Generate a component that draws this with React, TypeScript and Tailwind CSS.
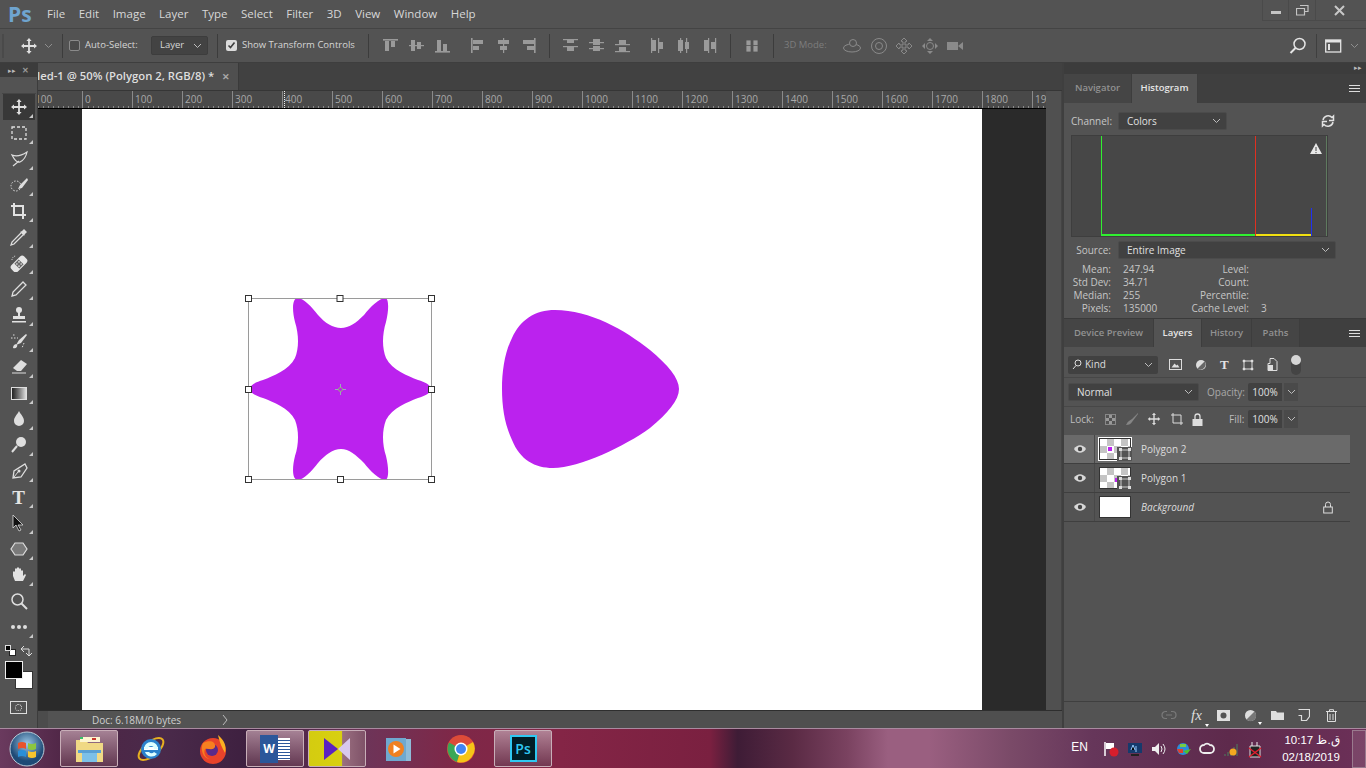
import React from "react";
const F = { fontFamily: '"Open Sans","Noto Sans","Liberation Sans",sans-serif' };

function Ic({ w = 20, h = 20, children, className = "", vb }: { w?: number; h?: number; children: React.ReactNode; className?: string; vb?: string }) {
  return <svg width={w} height={h} viewBox={vb ?? `0 0 ${w} ${h}`} className={"shrink-0 " + className}>{children}</svg>;
}
const Chev = ({ c = "#bdbdbd" }: { c?: string }) => <Ic w={9} h={6}><path d="M1 1l3.5 3.5L8 1" fill="none" stroke={c} strokeWidth="1" /></Ic>;

const MoveGlyph = ({ c = "#e0e0e0" }: { c?: string }) => (
  <Ic w={18} h={18} vb="0 0 18 18">
    <path d="M9 1l2.6 3H9.900v4.100H14V6.400l3 2.600-3 2.600V9.900H9.900V14h1.700L9 17l-2.600-3h1.700V9.900H4v1.700L1 9l3-2.600v1.700h4.100V4H6.400z" fill={c} />
  </Ic>
);

const menu = ["File", "Edit", "Image", "Layer", "Type", "Select", "Filter", "3D", "View", "Window", "Help"];

function Sep() { return <div className="w-px h-6 bg-[#3c3c3c] shrink-0" />; }

function Align({ v }: { v: number }) {
  const c = "#9a9a9a";
  const shapes: Record<number, React.ReactNode> = {
    0: <><rect x="1" y="2" width="15" height="1.600" fill={c} /><rect x="3" y="4" width="4" height="10" fill={c} /><rect x="9" y="4" width="4" height="6" fill={c} /></>,
    1: <><rect x="1" y="8" width="15" height="1.200" fill={c} /><rect x="3" y="3" width="4" height="11" fill={c} /><rect x="9" y="5" width="4" height="7" fill={c} /></>,
    2: <><rect x="1" y="14" width="15" height="1.600" fill={c} /><rect x="3" y="3" width="4" height="11" fill={c} /><rect x="9" y="7" width="4" height="7" fill={c} /></>,
    3: <><rect x="2" y="1" width="1.600" height="15" fill={c} /><rect x="4" y="3" width="10" height="4" fill={c} /><rect x="4" y="9" width="6" height="4" fill={c} /></>,
    4: <><rect x="8" y="1" width="1.200" height="15" fill={c} /><rect x="3" y="3" width="11" height="4" fill={c} /><rect x="5" y="9" width="7" height="4" fill={c} /></>,
    5: <><rect x="14" y="1" width="1.600" height="15" fill={c} /><rect x="3" y="3" width="11" height="4" fill={c} /><rect x="7" y="9" width="7" height="4" fill={c} /></>,
    6: <><rect x="1" y="2" width="15" height="1.200" fill={c} /><rect x="1" y="9" width="15" height="1.200" fill={c} /><rect x="5" y="3" width="7" height="3" fill={c} /><rect x="5" y="10" width="7" height="4" fill={c} /></>,
    7: <><rect x="1" y="5" width="15" height="1.200" fill={c} /><rect x="1" y="11" width="15" height="1.200" fill={c} /><rect x="5" y="2" width="7" height="6" fill={c} /><rect x="5" y="9" width="7" height="5" fill={c} /></>,
    8: <><rect x="1" y="7" width="15" height="1.200" fill={c} /><rect x="1" y="14" width="15" height="1.200" fill={c} /><rect x="5" y="3" width="7" height="4" fill={c} /><rect x="5" y="10" width="7" height="4" fill={c} /></>,
    9: <><rect x="2" y="1" width="1.200" height="15" fill={c} /><rect x="9" y="1" width="1.200" height="15" fill={c} /><rect x="3" y="3" width="4" height="11" fill={c} /><rect x="10" y="5" width="4" height="7" fill={c} /></>,
    10: <><rect x="5" y="1" width="1.200" height="15" fill={c} /><rect x="11" y="1" width="1.200" height="15" fill={c} /><rect x="3" y="3" width="5" height="11" fill={c} /><rect x="10" y="5" width="4" height="7" fill={c} /></>,
    11: <><rect x="7" y="1" width="1.200" height="15" fill={c} /><rect x="14" y="1" width="1.200" height="15" fill={c} /><rect x="3" y="3" width="4" height="11" fill={c} /><rect x="10" y="5" width="4" height="7" fill={c} /></>,
  };
  return <Ic w={17} h={17}>{shapes[v]}</Ic>;
}

function OptionsBar() {
  return (
    <div className="h-[34px] bg-[#535353] border-b border-[#3e3e3e] flex items-center text-[9.500px] text-[#d6d6d6] shrink-0 relative whitespace-nowrap">
      <div className="w-[2px] h-6 ml-[2px] bg-[#4a4a4a]" />
      <div className="ml-[16px] flex items-center gap-[6px] w-[42px]"><MoveGlyph /><Chev c="#8f8f8f" /></div>
      <Sep />
      <div className="ml-[6px] w-[11px] h-[11px] rounded-[2px] border border-[#8a8a8a] bg-[#4a4a4a]" />
      <span className="ml-[5px] w-[66px]">Auto-Select:</span>
      <div className="w-[57px] h-[19px] bg-[#434343] border border-[#3d3d3d] rounded-[2px] flex items-center justify-between pl-[8px] pr-[5px]"><span>Layer</span><Chev /></div>
      <div className="ml-[9px]"><Sep /></div>
      <div className="ml-[8px] w-[11px] h-[11px] rounded-[2px] bg-[#dcdcdc] flex items-center justify-center"><Ic w={9} h={9}><path d="M1.500 4.500l2 2 4-5" fill="none" stroke="#3f3f3f" strokeWidth="1.600" /></Ic></div>
      <span className="ml-[5px] w-[126px]">Show Transform Controls</span>
      <Sep />
      <div className="ml-[13px] flex items-center gap-[9px]"><Align v={0} /><Align v={1} /><Align v={2} /></div>
      <div className="ml-[18px] flex items-center gap-[8.500px]"><Align v={3} /><Align v={4} /><Align v={5} /></div>
      <div className="ml-[12px]"><Sep /></div>
      <div className="ml-[12px] flex items-center gap-[9px]"><Align v={6} /><Align v={7} /><Align v={8} /></div>
      <div className="ml-[18px] flex items-center gap-[9px]"><Align v={9} /><Align v={10} /><Align v={11} /></div>
      <div className="ml-[12px]"><Sep /></div>
      <div className="ml-[13px]"><Ic w={16} h={16}><path d="M2 2h5v12H2zM9 2h5v12H9zM2 7.500h12" fill="#9a9a9a" stroke="#535353" strokeWidth=".8" /></Ic></div>
      <div className="ml-[13px]"><Sep /></div>
      <span className="ml-[10px] text-[#7d7d7d] w-[49px]">3D Mode:</span>
      <div className="flex items-center gap-[7.500px] ml-[9px]">
        <Ic w={20} h={18}><g fill="none" stroke="#8a8a8a"><ellipse cx="10" cy="11" rx="8.500" ry="4" /><circle cx="11" cy="6" r="3.500" fill="#535353" /></g></Ic>
        <Ic w={18} h={18}><g fill="none" stroke="#8a8a8a"><circle cx="9" cy="9" r="7.500" /><circle cx="9" cy="9" r="3.500" /></g></Ic>
        <Ic w={18} h={18}><path d="M9 1l3 3-2 1v3h3l1-2 3 3-3 3-1-2h-3v3l2 1-3 3-3-3 2-1v-3H5l-1 2-3-3 3-3 1 2h3V5L6 4z" fill="none" stroke="#8a8a8a" /></Ic>
        <Ic w={18} h={18}><g fill="#8a8a8a"><path d="M9 1l3 3H6zM9 17l3-3H6zM1 9l3-3v6zM17 9l-3-3v6z" /></g><circle cx="9" cy="9" r="3.500" fill="none" stroke="#8a8a8a" /></Ic>
        <Ic w={18} h={14}><rect x="1" y="3" width="11" height="8" fill="#8a8a8a" /><path d="M12 7l5-4v8z" fill="#8a8a8a" /></Ic>
      </div>
      <div className="ml-auto flex items-center mr-[7px]">
        <Ic w={18} h={18}><circle cx="10.500" cy="7" r="5.500" fill="none" stroke="#e4e4e4" strokeWidth="1.500" /><path d="M6.500 11l-5 5" stroke="#e4e4e4" strokeWidth="2" /></Ic>
        <div className="w-px h-6 bg-[#3f3f3f] ml-[9px] mr-[8px]" />
        <Ic w={17} h={14}><rect x=".7" y="1" width="15" height="12" fill="none" stroke="#e4e4e4" strokeWidth="1.300" /><rect x="1" y="1" width="15" height="2.500" fill="#e4e4e4" /><rect x="3" y="5" width="2" height="6" fill="#e4e4e4" /></Ic>
        <div className="ml-[8px]"><Chev c="#8f8f8f" /></div>
      </div>
    </div>
  );
}

const Cor = () => <div className="absolute right-[2px] bottom-[2px] w-0 h-0 border-l-[4px] border-l-transparent border-b-[4px] border-b-[#c9c9c9]" />;

const tools: React.ReactNode[] = [
  <MoveGlyph key="m" />,
  <Ic key="a" w={18} h={18}><rect x="2" y="3" width="14" height="12" fill="none" stroke="#dedede" strokeWidth="1.300" strokeDasharray="3 2" /></Ic>,
  <Ic key="b" w={18} h={18}><path d="M2 5c5 2 9 1 15-3-1 5-3 8-7 10-3 1-6-3-8-7zM9 11l-6 5" fill="none" stroke="#dedede" strokeWidth="1.200" /></Ic>,
  <Ic key="c" w={18} h={18}><circle cx="6" cy="10" r="5" fill="none" stroke="#dedede" strokeDasharray="1.500 1.500" /><path d="M17 2l-7 7-2 4 4-1 6-8z" fill="#dedede" /></Ic>,
  <Ic key="d" w={18} h={18}><path d="M4 1v12h12M1 4h12v13" fill="none" stroke="#e2e2e2" strokeWidth="2" /></Ic>,
  <Ic key="e" w={18} h={18}><path d="M11 5l-9 9-1 3 3-1 9-9" fill="none" stroke="#dedede" strokeWidth="1.300" /><path d="M10 4l4 4 1-2 2-2-3-3-2 2z" fill="#dedede" /></Ic>,
  <Ic key="f" w={18} h={18}><g transform="rotate(-45 9 10)"><rect x="0" y="5.500" width="18" height="9" rx="3" fill="#e6e6e6" /><rect x="6" y="6.500" width="6" height="7" fill="#6a6a6a" /><circle cx="7.500" cy="8.500" r=".8" fill="#eee" /><circle cx="10.500" cy="8.500" r=".8" fill="#eee" /><circle cx="7.500" cy="11.500" r=".8" fill="#eee" /><circle cx="10.500" cy="11.500" r=".8" fill="#eee" /></g><path d="M2 6a4 4 0 014-4" fill="none" stroke="#e2e2e2" strokeDasharray="1 1" /></Ic>,
  <Ic key="g" w={18} h={18}><path d="M13 2l3 3L6 15l-4 1 1-4z" fill="none" stroke="#dedede" strokeWidth="1.300" /></Ic>,
  <Ic key="h" w={18} h={18}><circle cx="9" cy="4" r="3" fill="#e2e2e2" /><rect x="8" y="6" width="2" height="4" fill="#e2e2e2" /><path d="M3 10h12v3H3zM2 15h14v1.500H2z" fill="#e2e2e2" /></Ic>,
  <Ic key="i" w={18} h={18}><path d="M16 2l-7 6-3 5 5-2 6-8zM7 12c-3 0-4 2-4 4 3 1 5-1 4-4z" fill="#dedede" /><path d="M1 6h7M3 3h3M14 11l-2 5" stroke="#dedede" strokeDasharray="1.500 1.500" /></Ic>,
  <Ic key="j" w={18} h={18}><path d="M11 2l6 4-6 7H7L3 10z" fill="#dedede" /><path d="M2 15h14" stroke="#dedede" /></Ic>,
  <div key="k" className="w-[16px] h-[13px] border border-[#dedede] bg-gradient-to-r from-[#222] to-[#ddd]" />,
  <Ic key="l" w={18} h={18}><path d="M9 1c2 4 5 6 5 10a5 5 0 01-10 0c0-4 3-6 5-10z" fill="#dedede" /></Ic>,
  <Ic key="m2" w={18} h={18}><circle cx="11" cy="6" r="5" fill="#dedede" /><path d="M7 10l-5 6" stroke="#dedede" strokeWidth="2" /></Ic>,
  <Ic key="n" w={18} h={18}><path d="M15 2l2 4-6 9-8 1 1-7z" fill="none" stroke="#dedede" strokeWidth="1.300" /><circle cx="9" cy="9" r="1.500" fill="#dedede" /><path d="M4 15l4-5" stroke="#dedede" /></Ic>,
  <span key="o" className="text-[#e4e4e4] text-[19px] leading-none font-bold" style={{ fontFamily: '"Liberation Serif",serif' }}>T</span>,
  <Ic key="p" w={18} h={18}><path d="M3 1v13l3-3 3 6 2-1-3-5h5z" fill="#111" stroke="#ddd" strokeWidth=".8" /></Ic>,
  <Ic key="q" w={18} h={18}><path d="M5 3h8l4 6-4 6H5L1 9z" fill="#7a7a7a" stroke="#dedede" strokeWidth="1.200" /></Ic>,
  <Ic key="r" w={18} h={18}><path d="M3 10V6l1-1 1 1V3l1-1 1 1v-1l1-1 1 1v1l1-1 1 1v2l1-1 1 1v5l2-2 1 1-3 6H5z" fill="#e2e2e2" /></Ic>,
  <Ic key="s" w={18} h={18}><circle cx="7.500" cy="7.500" r="5.500" fill="none" stroke="#dedede" strokeWidth="1.500" /><path d="M11.500 11.500L17 17" stroke="#dedede" strokeWidth="2" /></Ic>,
  <Ic key="t" w={18} h={18}><circle cx="3" cy="9" r="2" fill="#dedede" /><circle cx="9" cy="9" r="2" fill="#dedede" /><circle cx="15" cy="9" r="2" fill="#dedede" /></Ic>,
];

function Toolbar() {
  return (
    <div className="w-[38px] shrink-0 bg-[#535353] border-r border-[#3c3c3c] flex flex-col items-center relative z-10">
      <div className="w-full h-[14px] bg-[#3c3c3c] flex items-center justify-between px-[8px]">
        <span className="text-[7px] text-[#bbb] leading-none">▸▸</span>
        <span className="text-[8px] text-[#999] leading-none font-bold">✕</span>
      </div>
      <div className="w-[34px] h-[17px] border-b border-[#454545]" />
      <div className="flex flex-col">
        {tools.map((t, i) => (
          <div key={i} className={"relative w-[32px] h-[26px] flex items-center justify-center " + (i === 0 ? "bg-[#383838]" : "")}>
            {t}{i !== 19 && <Cor />}
          </div>
        ))}
      </div>
      <div className="w-[32px] h-[15px] flex items-center justify-between px-[2px] mt-[3px]">
        <div className="relative w-[11px] h-[11px]"><div className="absolute right-0 bottom-0 w-[7px] h-[7px] bg-white border border-[#222]" /><div className="absolute left-0 top-0 w-[6px] h-[6px] bg-black border border-[#ddd]" /></div>
        <Ic w={13} h={12}><path d="M1 4h8v7M1 4l3-3M1 4l3 3M9 11l3-3M9 11L6 8" fill="none" stroke="#ddd" /></Ic>
      </div>
      <div className="relative w-[28px] h-[28px] mt-[3px]">
        <div className="absolute left-[10px] top-[10px] w-[18px] h-[18px] bg-white border border-[#333]" />
        <div className="absolute left-0 top-0 w-[18px] h-[18px] bg-black border border-[#eee]" />
      </div>
      <div className="mt-[12px] w-[17px] h-[13px] border border-[#ddd] flex items-center justify-center"><div className="w-[7px] h-[7px] rounded-full border border-dotted border-[#ddd]" /></div>
    </div>
  );
}

const rulerLabels = ["100", "0", "100", "200", "300", "400", "500", "600", "700", "800", "900", "1000", "1100", "1200", "1300", "1400", "1500", "1600", "1700", "1800", "19"];

function Ruler() {
  return (
    <div className="h-[18px] shrink-0 bg-[#494949] flex overflow-hidden border-b border-black relative">
      {rulerLabels.map((l, i) => (
        <div key={i} className="w-[50px] shrink-0 border-l border-[#8a8a8a] text-[10px] leading-none text-[#a8a8a8] pl-[2px] pt-[3px] h-[17px] relative" style={i === 0 ? { marginLeft: -6 } : undefined}>
          {l}
          <div className="absolute bottom-0 left-[5px] right-0 h-[2px] bg-[repeating-linear-gradient(90deg,#8a8a8a_0,#8a8a8a_1px,transparent_1px,transparent_5px)]" />
        </div>
      ))}
      <div className="absolute left-[246px] top-0 bottom-0 border-l border-dotted border-[#eee]" />
    </div>
  );
}

function Artboard() {
  return (
    <div className="w-[900px] h-full bg-white relative">
      <svg width="900" height="601" className="absolute left-0 top-0">
        <g transform="translate(-82,-109)">
          <path d="M298 298C303 298 312 307 318 315C325 323 333 328 341 328C349 328 356 323 364 315C370 307 380 298 385 298C389 298 389 310 386 322C382 335 382 348 386 358C392 370 408 376 418 380C425 382 431 385 431 389C431 393 425 396 418 398C408 402 392 408 386 420C382 430 382 444 386 456C389 468 389 480 385 480C380 480 370 471 364 463C356 455 349 449 341 449C333 449 325 455 318 463C312 471 303 480 298 480C292 480 292 468 295 456C299 444 299 430 295 420C289 408 273 402 263 398C256 396 250 393 250 389C250 385 256 382 263 380C273 376 289 370 295 358C299 348 299 335 295 322C292 310 292 298 298 298Z" fill="#bb22ee" />
          <path d="M555 310C590 310 625 330 650 350C668 365 679 378 679 389C679 400 668 413 650 428C625 446 580 468 553 468C535 468 520 460 512 440C505 425 502 408 502 389C502 370 505 352 512 338C520 320 535 310 555 310Z" fill="#bb22ee" />
          <rect x="248.500" y="298.500" width="183" height="181" fill="none" stroke="#9a9a9a" />
          {[[248, 298], [339.500, 298], [431, 298], [248, 389], [431, 389], [248, 479], [340, 479], [431, 479]].map(([x, y], i) => (
            <rect key={i} x={x - 2.500} y={y - 2.500} width="6" height="6" fill="#fff" stroke="#333" strokeWidth="1" />
          ))}
          <path d="M335 389.500h4M342 389.500h4M340.500 384v4M340.500 391v4" stroke="#9ab" strokeWidth="1" />
          <circle cx="340.500" cy="389.500" r="2" fill="none" stroke="#9a7" />
        </g>
      </svg>
    </div>
  );
}

function Center() {
  return (
    <div className="flex-1 min-w-0 flex flex-col bg-[#3f3f3f]">
      <div className="h-[28px] bg-[#414141] flex shrink-0 border-b border-[#363636]">
        <div className="w-[201px] bg-[#4f4f4f] border-r border-[#3a3a3a] flex items-center justify-between pr-[8px] overflow-hidden">
          <span className="text-[11.300px] font-semibold text-[#dedede] whitespace-nowrap ml-[-1px]">led-1 @ 50% (Polygon 2, RGB/8) *</span>
          <span className="text-[9px] text-[#a8a8a8] font-bold">✕</span>
        </div>
      </div>
      <div className="flex-1 min-h-0 flex">
        <div className="w-[1008px] shrink-0 flex flex-col">
          <Ruler />
          <div className="flex-1 min-h-0 bg-[#2a2a2a] flex pl-[44px]">
            <Artboard />
          </div>
        </div>
        <div className="flex-1 bg-[#505050] border-r border-[#444]" />
      </div>
      <div className="h-[18px] bg-[#4c4c4c] border-t border-[#2e2e2e] flex items-center shrink-0">
        <div className="w-[10px]" />
        <div className="w-[182px] h-full bg-[#535353] flex items-center text-[10px] text-[#cfcfcf]">
          <span className="ml-[44px] leading-none">Doc: 6.18M/0 bytes</span>
          <svg width="6" height="10" className="ml-auto mr-[2px]"><path d="M1 0l4 5-4 5" fill="none" stroke="#bbb" /></svg>
        </div>
        <div className="flex-1 h-full bg-[#4f4f4f]" />
      </div>
    </div>
  );
}

function Tab({ t, on, w }: { t: string; on?: boolean; w: number }) {
  return <div style={{ width: w }} className={"h-full flex items-center justify-center text-[9.500px] font-semibold border-r border-[#3d3d3d] " + (on ? "bg-[#535353] text-[#e6e6e6]" : "bg-[#454545] text-[#929292]")}>{t}</div>;
}
const Hamb = () => <div className="ml-auto mr-[6px] w-[11px] h-[7px] border-y border-[#ddd] relative"><div className="absolute left-0 right-0 top-[2px] h-px bg-[#ddd]" /></div>;

function Sel({ w, t, className = "" }: { w: number; t: string; className?: string }) {
  return <div style={{ width: w }} className={"h-[18px] bg-[#414141] border border-[#4b4b4b] rounded-[2px] flex items-center justify-between pl-[8px] pr-[5px] text-[10px] text-[#e0e0e0] shrink-0 " + className}><span>{t}</span><Chev /></div>;
}

const Eye = () => <Ic w={14} h={10}><path d="M1 5c3-5 9-5 12 0-3 5-9 5-12 0z" fill="#d8d8d8" /><circle cx="7" cy="5" r="2.200" fill="#444" /></Ic>;
const Checker = "bg-[repeating-conic-gradient(#c4c4c4_0_25%,#ffffff_0_50%)] bg-[length:14px_14px]";

function LayerRow({ name, sel, bg, italic, dot }: { name: string; sel?: boolean; bg?: boolean; italic?: boolean; dot?: string }) {
  return (
    <div className={"h-[29px] flex items-center border-b border-[#3f3f3f] w-[286px] " + (sel ? "bg-[#6a6a6a]" : "bg-[#535353]")}>
      <div className="w-[31px] h-full flex items-center justify-center border-r border-[#484848] pl-[2px]"><Eye /></div>
      <div className={"relative ml-[4px] w-[32px] h-[22px] border border-[#333] " + (bg ? "bg-white" : Checker) + (sel ? " outline outline-1 outline-white" : "")}>
        {dot && <div className={"absolute w-[4px] h-[4px] bg-[#bb22ee] " + dot} />}
        {!bg && <div className="absolute right-[-2px] bottom-[-2px] w-[15px] h-[14px] bg-[#535353] flex items-center justify-center">
          <Ic w={12} h={12}><rect x="2" y="2" width="8" height="8" fill="none" stroke="#ccc" /><path d="M0 0h3v3H0zM9 0h3v3H9zM0 9h3v3H0zM9 9h3v3H9z" fill="#ddd" /></Ic>
        </div>}
      </div>
      <span className={"ml-[10px] text-[10px] text-[#dcdcdc] " + (italic ? "italic" : "")}>{name}</span>
      {bg && <div className="ml-auto mr-[17px]"><Ic w={10} h={13}><path d="M2.500 6V3.500a2.500 2.500 0 015 0V6" fill="none" stroke="#ddd" /><rect x=".7" y="6" width="8.600" height="6" fill="none" stroke="#ddd" /></Ic></div>}
    </div>
  );
}

function RightPanels() {
  return (
    <div className="w-[304px] shrink-0 flex bg-[#3f3f3f] text-[10px]">
      <div className="w-[2px] bg-[#3f3f3f]" />
      <div className="flex-1 flex flex-col bg-[#535353] relative">
        <div className="h-[11px] bg-[#3c3c3c] flex justify-end items-center pr-[4px] text-[7px] text-[#bbb]">▸▸</div>
        <div className="h-[29px] flex bg-[#3f3f3f] items-center">
          <Tab t="Navigator" w={68} /><Tab t="Histogram" on w={66} /><Hamb />
        </div>
        <div className="h-[215px] px-[7px] relative text-[#c6c6c6]">
          <div className="h-[32px] pt-[4px] flex items-center">
            <span className="w-[47px]">Channel:</span>
            <Sel w={109} t="Colors" />
            <div className="ml-[94px]"><Ic w={14} h={14}><path d="M2 6a5.200 5.200 0 019-2.500l1.500-1.500v4.500H8M12 8a5.200 5.200 0 01-9 2.500L1.500 12V7.500H6" fill="none" stroke="#e2e2e2" strokeWidth="1.500" /></Ic></div>
          </div>
          <div className="w-[257px] h-[102px] bg-[#474747] border border-[#3e3e3e] relative overflow-hidden">
            <div className="absolute left-[29px] top-0 w-px h-[100px] bg-[#30f030]" />
            <div className="absolute left-[183px] top-0 w-px h-[100px] bg-[#e03020]" />
            <div className="absolute left-[254px] top-0 w-px h-[100px] bg-[#5f7a5f]" />
            <div className="absolute left-[29px] top-[98px] w-[154px] h-[2px] bg-[#30f030]" />
            <div className="absolute left-[184px] top-[98px] w-[55px] h-[2px] bg-[#f0e010]" />
            <div className="absolute left-[239px] top-[72px] w-px h-[28px] bg-[#2030f0]" />
            <div className="absolute left-[237px] top-[6px]"><Ic w={14} h={13}><path d="M7 1l6 11H1z" fill="#e8e8e8" /><path d="M7 5v4M7 10v1.200" stroke="#444" /></Ic></div>
          </div>
          <div className="flex items-center h-[26px]">
            <span className="w-[40px] text-right mr-[7px]">Source:</span>
            <Sel w={218} t="Entire Image" />
          </div>
          <div className="grid gap-x-[12px] leading-[13px] whitespace-nowrap -ml-[5px]" style={{ gridTemplateColumns: "45px 50px 64px 30px" }}>
            {[["Mean:", "247.94", "Level:", ""], ["Std Dev:", "34.71", "Count:", ""], ["Median:", "255", "Percentile:", ""], ["Pixels:", "135000", "Cache Level:", "3"]].flatMap((r) => [
              <span key={r[0]} className="text-right">{r[0]}</span>,
              <span key={r[1]}>{r[1]}</span>,
              <span key={r[2]} className="text-right justify-self-end">{r[2]}</span>,
              <span key={r[2] + "v"}>{r[3]}</span>,
            ])}
          </div>
        </div>
        <div className="h-[29px] flex bg-[#3f3f3f] items-center border-t border-[#3a3a3a]">
          <Tab t="Device Preview" w={90} /><Tab t="Layers" on w={48} /><Tab t="History" w={50} /><Tab t="Paths" w={48} /><Hamb />
        </div>
        <div className="h-[31px] flex items-center pl-[4px] pt-[5px] border-b border-[#474747] text-[#ddd]">
          <div className="w-[90px] h-[18px] bg-[#414141] rounded-[2px] flex items-center pl-[4px] pr-[5px] gap-[3px]">
            <Ic w={10} h={11}><circle cx="6" cy="4" r="3" fill="none" stroke="#ddd" /><path d="M4 6.500L1 10" stroke="#ddd" /></Ic>
            <span>Kind</span><span className="ml-auto"><Chev /></span>
          </div>
          <div className="ml-[11px] flex items-center gap-[13px]">
            <Ic w={13} h={11}><rect x=".5" y=".5" width="12" height="10" fill="none" stroke="#ddd" /><path d="M2.500 8.500l3-4 2 2 1-1 2 3z" fill="#ddd" /></Ic>
            <Ic w={12} h={12}><circle cx="6" cy="6" r="5" fill="#ddd" /><path d="M9.500 2.500L2.500 9.500A5 5 0 009.500 2.500z" fill="#666" /></Ic>
            <span className="text-[#e4e4e4] text-[13px] leading-none font-bold" style={{ fontFamily: '"Liberation Serif",serif' }}>T</span>
            <Ic w={12} h={12}><rect x="2" y="2" width="8" height="8" fill="none" stroke="#ddd" /><path d="M1 1h2v2H1zM9 1h2v2H9zM1 9h2v2H1zM9 9h2v2H9z" fill="#ddd" stroke="#ddd" strokeWidth=".5" /></Ic>
            <Ic w={11} h={13}><path d="M3 .5h4l3 3v9H1v-7h2z" fill="none" stroke="#ddd" /><rect x="1" y="7" width="5" height="6" fill="#ddd" /></Ic>
          </div>
          <div className="ml-[13px] w-[10px] h-[20px] rounded-full bg-[#444] relative"><div className="absolute top-0 left-0 w-[10px] h-[10px] rounded-full bg-[#d6d6d6]" /></div>
        </div>
        <div className="h-[29px] flex items-center pl-[4px] border-b border-[#474747]">
          <Sel w={131} t="Normal" />
          <span className="ml-[8px] text-[#a9a9a9] w-[36px]">Opacity:</span>
          <div className="ml-[5px] h-[18px] w-[34px] bg-[#414141] flex items-center justify-center text-[#e0e0e0] rounded-l-[2px]">100%</div>
          <div className="ml-[2px] h-[18px] w-[14px] bg-[#4a4a4a] flex items-center justify-center"><Chev /></div>
        </div>
        <div className="h-[28px] flex items-center pl-[6px] pb-[4px] text-[#bdbdbd]">
          <span className="w-[25px]">Lock:</span>
          <div className="flex items-center gap-[8.500px] ml-[10px]">
            <div className={"w-[11px] h-[11px] border border-[#888] bg-[repeating-conic-gradient(#999_0_25%,#535353_0_50%)] bg-[length:6px_6px]"} />
            <Ic w={14} h={14}><path d="M13 1L7 7 4 9c-2 1-2 3-3 4 3 0 5-1 6-3l6-8z" fill="#858585" /></Ic>
            <Ic w={14} h={14} vb="0 0 18 18"><path d="M9 1l2.600 3H9.900v4.100H14V6.400l3 2.600-3 2.600V9.900H9.900V14h1.700L9 17l-2.600-3h1.700V9.900H4v1.700L1 9l3-2.600v1.700h4.100V4H6.400z" fill="#ddd" /></Ic>
            <Ic w={14} h={14}><path d="M3 1v10h10M1 3h10v10" fill="none" stroke="#ddd" /></Ic>
            <Ic w={11} h={13}><path d="M3 6V3.500a2.500 2.500 0 015 0V6" fill="none" stroke="#ddd" strokeWidth="1.300" /><rect x=".5" y="6" width="10" height="7" fill="#ddd" /></Ic>
          </div>
          <span className="ml-[26px] w-[14px]">Fill:</span>
          <div className="ml-[5px] h-[18px] w-[34px] bg-[#414141] flex items-center justify-center text-[#e0e0e0] rounded-l-[2px]">100%</div>
          <div className="ml-[2px] h-[18px] w-[14px] bg-[#4a4a4a] flex items-center justify-center"><Chev /></div>
        </div>
        <div className="flex flex-col">
          <LayerRow name="Polygon 2" sel dot="left-[8px] top-[8px]" />
          <LayerRow name="Polygon 1" dot="left-[15px] top-[10px]" />
          <LayerRow name="Background" bg italic />
        </div>
        <div className="flex-1" />
        <div className="h-[27px] border-t border-[#3f3f3f] flex items-center justify-end pr-[29px] gap-[14px] bg-[#535353]">
          <Ic w={16} h={10}><path d="M6 1.500H4.500a3.500 3.500 0 000 7H6M10 1.500h1.500a3.500 3.500 0 010 7H10M5 5h6" fill="none" stroke="#7a7a7a" strokeWidth="1.200" /></Ic>
          <span className="relative text-[15px] w-[12px] text-[#dedede] italic leading-none" style={{ fontFamily: '"Liberation Serif",serif' }}>fx
            <div className="absolute -right-[6px] -bottom-[4px] w-0 h-0 border-x-[2.500px] border-x-transparent border-t-[3px] border-t-white" />
          </span>
          <Ic w={13} h={11}><rect width="13" height="11" fill="#e0e0e0" /><circle cx="6.500" cy="5.500" r="3" fill="#555" /></Ic>
          <div className="relative">
            <Ic w={13} h={13}><circle cx="6.500" cy="6.500" r="5.500" fill="#ddd" /><path d="M10.500 2.500l-8 8a5.500 5.500 0 008-8z" fill="#777" /></Ic>
            <div className="absolute -right-[5px] -bottom-[3px] w-0 h-0 border-x-[2.500px] border-x-transparent border-t-[3px] border-t-white" />
          </div>
          <Ic w={13} h={10}><path d="M0 1h5l1 1.500h7V10H0z" fill="#ddd" /></Ic>
          <Ic w={12} h={12}><path d="M.5.500h11v7l-3 4h-5v-5h-3" fill="none" stroke="#ddd" strokeWidth="1.200" /></Ic>
          <Ic w={11} h={13} className="ml-[2px]"><path d="M0 2.500h11M3.500 2.500V.7h4v1.800M1.500 3v9.500h8V3M4 5v6M7 5v6" fill="none" stroke="#ddd" /></Ic>
        </div>
      </div>
    </div>
  );
}

function TaskBtn({ active, children, className = "" }: { active?: boolean; children: React.ReactNode; className?: string }) {
  return (
    <div className="w-[62px] h-full flex items-center justify-center shrink-0">
      <div className={"w-[58px] h-[37px] flex items-center justify-center rounded-[2px] " + (active ? "border border-[#c8aeb8] bg-gradient-to-b from-[#bb98a8]/80 to-[#6c4056]/70 " : "") + className}>{children}</div>
    </div>
  );
}

function Tray({ children }: { children: React.ReactNode }) {
  return <div className="w-[24px] flex items-center justify-center shrink-0">{children}</div>;
}

function Taskbar() {
  return (
    <div className="h-[40px] shrink-0 flex items-center bg-[linear-gradient(90deg,#6a3a5e_0%,#4e2545_5%,#4a2a4a_12%,#3e2040_18%,#6e3458_27%,#7e2848_33%,#842546_41%,#7a2040_52%,#3e1c36_54%,#5a2a44_58%,#7a4260_62%,#9a5f80_65%,#9a5f80_68%,#7a4a68_74%,#66365a_80%,#5e2a4c_90%,#6c3058_100%)] border-t border-[#a98aa0] relative text-white">
      <div className="w-[58px] shrink-0 flex justify-center pr-[4px]">
        <svg width="36" height="36"><defs><radialGradient id="orb" cx=".5" cy=".35"><stop offset="0" stopColor="#9cc8e8" /><stop offset="1" stopColor="#1e4a76" /></radialGradient></defs><circle cx="18" cy="18" r="17" fill="url(#orb)" stroke="#b8cbd8" />
          <path d="M9 12q4-2 8 0v6q-4-2-8 0z" fill="#e8532b" /><path d="M19 12q4 2 8 0v6q-4 2-8 0z" fill="#8cc63f" /><path d="M9 20q4-2 8 0v6q-4-2-8 0z" fill="#2a8fd8" /><path d="M19 20q4 2 8 0v6q-4 2-8 0z" fill="#f7c52d" /></svg>
      </div>
      <TaskBtn active>
        <svg width="31" height="30"><path d="M2 6h10l2 3h15v19H2z" fill="#f0d985" /><rect x="6" y="3" width="20" height="5" fill="#fdf5d0" /><rect x="6" y="3" width="3" height="2" fill="#39c06a" /><rect x="18" y="4" width="4" height="2" fill="#c8382e" /><path d="M8 18h15v10H8z" fill="#7cc0e8" /><path d="M4 16h23v3H4z" fill="#59a0d4" /></svg>
      </TaskBtn>
      <TaskBtn>
        <svg width="30" height="32"><ellipse cx="15" cy="16" rx="15" ry="7" transform="rotate(-40 15 16)" fill="none" stroke="#e8b020" strokeWidth="2" /><circle cx="15" cy="16" r="10" fill="#2a82cc" /><rect x="8" y="14" width="14" height="3" fill="#fff" /><path d="M8 16a7 7 0 0114 0h-4a3 3 0 00-6 0z" fill="#dff" /><path d="M9 19a7 7 0 0012 2l-3-2a3 3 0 01-5 0z" fill="#dff" /></svg>
      </TaskBtn>
      <TaskBtn>
        <svg width="30" height="32"><circle cx="15" cy="18" r="13" fill="#e8432a" /><path d="M20 2c6 5 9 11 7 18-3-6-5-9-7-18z" fill="#fcb022" /><circle cx="14" cy="17" r="6" fill="#5a2a8a" /><path d="M5 10c6-3 13-2 12 4-2 4-7 1-10 2-2 5 1 9 5 10-7 0-10-10-7-16z" fill="#f78020" /></svg>
      </TaskBtn>
      <TaskBtn active>
        <div className="relative w-[30px] h-[28px]"><div className="absolute right-0 top-[3px] w-[20px] h-[22px] bg-white bg-[repeating-linear-gradient(180deg,#fff_0,#fff_2px,#2b579a_2px,#2b579a_3px)]" /><div className="absolute left-0 top-0 w-[18px] h-[28px] bg-[#2b579a] flex items-center justify-center text-[12px] font-bold text-white">W</div></div>
      </TaskBtn>
      <TaskBtn className="border border-[#c8aeb8] bg-[linear-gradient(90deg,#d4cc10_0%,#d8d010_58%,#9a6f80_60%,#7f5268_100%)]">
        <svg width="30" height="26"><path d="M2 2l14 11L2 24z" fill="#5b22c0" /><path d="M28 2L16 13l12 11z" fill="#d8c8ec" /></svg>
      </TaskBtn>
      <TaskBtn>
        <svg width="28" height="28"><rect x="4" y="4" width="22" height="22" fill="#8fbcd8" /><rect x="1" y="3" width="20" height="23" fill="#6fa9cf" /><circle cx="11" cy="14" r="8" fill="#f08020" /><path d="M8.500 9.500l7 4.500-7 4.500z" fill="#fff" /></svg>
      </TaskBtn>
      <TaskBtn>
        <svg width="30" height="30"><circle cx="15" cy="15" r="14" fill="#dd4b39" /><path d="M15 15L3 8.500A14 14 0 0 0 11 28z" fill="#3aa757" /><path d="M15 15l-4 13A14 14 0 0 0 27 8z" fill="#f5c518" /><path d="M3 8.500A14 14 0 0 1 27 8H15z" fill="#dd4b39" /><circle cx="15" cy="15" r="6.500" fill="#fff" /><circle cx="15" cy="15" r="5" fill="#4285f4" /></svg>
      </TaskBtn>
      <TaskBtn active>
        <div className="w-[27px] h-[27px] bg-[#001d26] border-2 border-[#2fc8f2] flex items-center justify-center text-[14px] font-semibold text-[#2fc8f2] leading-none">Ps</div>
      </TaskBtn>
      <div className="ml-auto flex items-center">
        <span className="text-[12px] mr-[11px] -mt-[3px]" style={{ fontFamily: '"Liberation Sans",sans-serif' }}>EN</span>
        <div className="flex items-center mr-[8px]">
          <Tray><svg width="16" height="16"><path d="M2 1v14" stroke="#fff" strokeWidth="1.500" /><path d="M3 2h8v6H3z" fill="#fff" /><circle cx="11" cy="11" r="4.500" fill="#d81e2c" /></svg></Tray>
          <Tray><svg width="16" height="16"><rect x="1" y="2" width="14" height="10" fill="#153a6c" /><path d="M4 9l2-5 2 5M9 5v6" stroke="#9cf" /><rect x="4" y="13" width="8" height="2" fill="#222" /></svg></Tray>
          <Tray><svg width="16" height="16"><path d="M1 6h3l4-4v12l-4-4H1z" fill="#eee" /><path d="M10 5q2 3 0 6M12 3q4 5 0 10" stroke="#eee" fill="none" /></svg></Tray>
          <Tray><svg width="18" height="16"><circle cx="9" cy="8" r="6" fill="#2c8cd8" /><path d="M3 8h6v4H5z" fill="#e04030" /><path d="M9 10l8-2-4 5z" fill="#50c030" /><path d="M6 3h6v3H6z" fill="#7c4" /></svg></Tray>
          <Tray><svg width="16" height="16"><path d="M5 4a4 4 0 000 8h6a4 4 0 000-8 4 4 0 00-6 0z" fill="none" stroke="#eee" strokeWidth="1.800" /></svg></Tray>
          <Tray><svg width="16" height="16"><path d="M1 13h2v2H1zM4 11h2v4H4zM7 9h2v6H7zM10 6h2v9h-2zM13 3h2v12h-2z" fill="#555" /><circle cx="10" cy="11" r="3.500" fill="#f4a820" /></svg></Tray>
          <Tray><svg width="14" height="18"><path d="M2 6h10v11H2z" fill="#222" stroke="#ddd" /><path d="M4 6V2M9 6V2" stroke="#eee" /><path d="M1 8l12 9M13 8L1 17" stroke="#e02030" strokeWidth="1.500" /></svg></Tray>
        </div>
        <div className="w-[72px] text-center text-[11.500px] leading-[17px]" style={{ fontFamily: '"Liberation Sans","Noto Sans",sans-serif' }}>
          <div className="pl-[2px]">10:17 ق.ظ</div>
          <div>02/18/2019</div>
        </div>
        <div className="w-[14px] h-[38px] ml-[5px] border border-[#9a7a8e] bg-[#8a5a78]/50" />
      </div>
    </div>
  );
}

export default function App() {
  return (
    <div className="w-[1366px] h-[768px] overflow-hidden flex flex-col bg-[#535353]" style={F}>
      <div className="h-[29px] shrink-0 flex items-center bg-[#535353] border-b border-[#444]">
        <span className="ml-[8px] w-[39px] text-[21px] font-bold leading-none text-[#6fa4cf]">Ps</span>
        <div className="flex items-center gap-[13.500px] text-[11.500px] text-[#d8d8d8]">
          {menu.map((m) => <span key={m}>{m}</span>)}
        </div>
        <div className="ml-auto flex items-center h-[21px] self-start border-b border-[#4a4a4a] text-[#cfcfcf]">
          <div className="w-[26px] h-full border-l border-[#4a4a4a] flex items-center justify-center"><div className="w-[10px] h-[3px] bg-[#c4c4c4] mt-[4px]" /></div>
          <div className="w-[27px] h-full border-l border-[#4a4a4a] flex items-center justify-center"><Ic w={13} h={11}><path d="M4 .5h8v6H9M.5 3.500h8v6.500h-8z" fill="none" stroke="#c4c4c4" strokeWidth="1.200" /></Ic></div>
          <div className="w-[51px] h-full border-l border-[#4a4a4a] flex items-center justify-center pr-[4px]"><Ic w={11} h={11}><path d="M1 1l9 9M10 1l-9 9" stroke="#c8c8c8" strokeWidth="2" /></Ic></div>
        </div>
      </div>
      <OptionsBar />
      <div className="flex-1 min-h-0 flex">
        <Toolbar />
        <Center />
        <RightPanels />
      </div>
      <Taskbar />
    </div>
  );
}
